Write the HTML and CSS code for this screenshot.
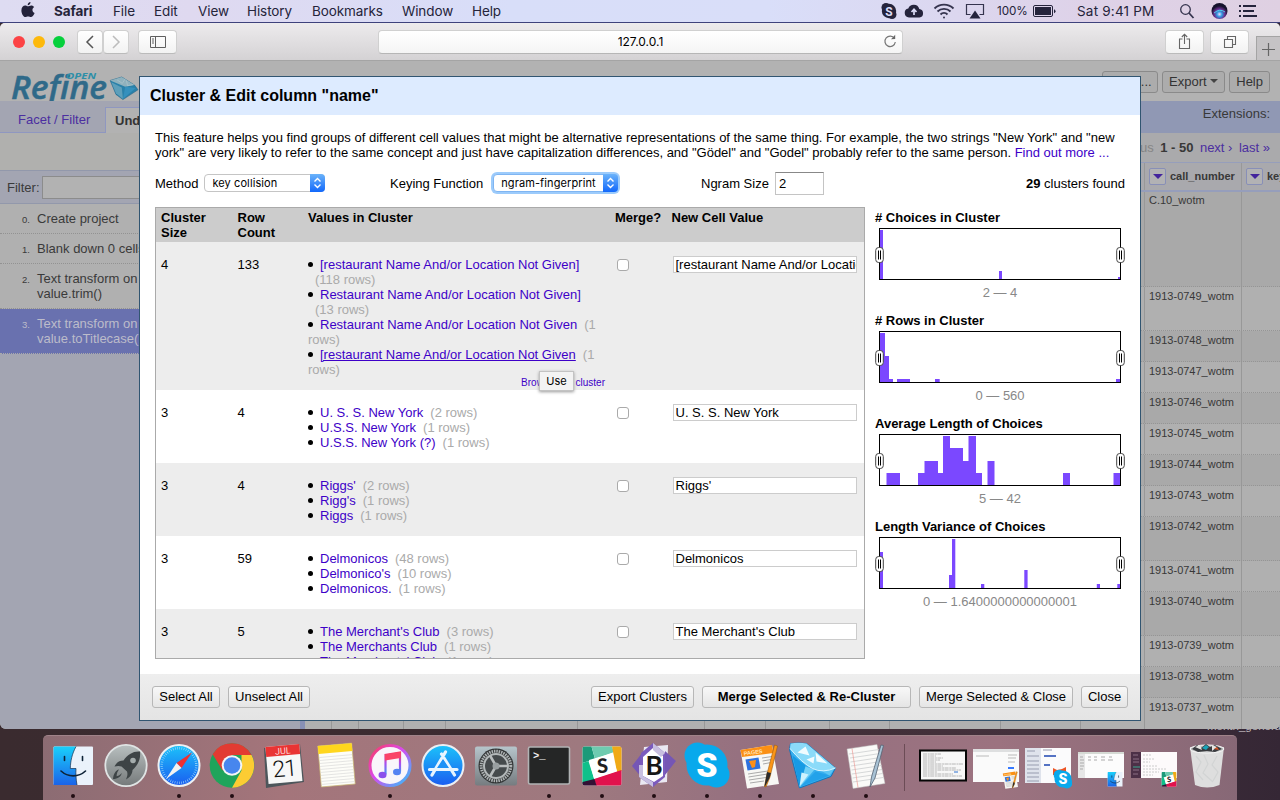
FILE: index.html
```html
<!DOCTYPE html>
<html lang="en">
<head>
<meta charset="utf-8">
<title>OpenRefine</title>
<link rel="stylesheet" href="styles.css">
</head>
<body>
<div class="desktop">
  <svg width="0" height="0" class="defs">
    <defs>
      <linearGradient id="gBlue" x1="0" y1="0" x2="0" y2="1"><stop offset="0" stop-color="#19d0fb"/><stop offset="1" stop-color="#1b63e8"/></linearGradient>
      <linearGradient id="gGrey" x1="0" y1="0" x2="0" y2="1"><stop offset="0" stop-color="#b9c0c0"/><stop offset="1" stop-color="#75797a"/></linearGradient>
      <linearGradient id="gStore" x1="0" y1="0" x2="0" y2="1"><stop offset="0" stop-color="#1cc3fa"/><stop offset="1" stop-color="#1a5cf0"/></linearGradient>
      <linearGradient id="gRing" x1="0" y1="0" x2="1" y2="1"><stop offset="0" stop-color="#fb3a5c"/><stop offset=".45" stop-color="#d94af0"/><stop offset="1" stop-color="#27c8fb"/></linearGradient>
      <linearGradient id="gNote" x1="0" y1="0" x2="0" y2="1"><stop offset="0" stop-color="#fb3b62"/><stop offset=".5" stop-color="#a94df0"/><stop offset="1" stop-color="#3a9bf6"/></linearGradient>
      <linearGradient id="gPref" x1="0" y1="0" x2="0" y2="1"><stop offset="0" stop-color="#b6c5cb"/><stop offset="1" stop-color="#767c80"/></linearGradient>
      <radialGradient id="gSiri" cx=".5" cy=".7" r=".65"><stop offset="0" stop-color="#f4d8ff"/><stop offset=".25" stop-color="#2f9ae0"/><stop offset=".5" stop-color="#6a2f90"/><stop offset=".8" stop-color="#15122c"/></radialGradient>
      <symbol id="finder" viewBox="0 0 48 48">
        <rect x="4.500" y="5.500" width="39.500" height="38.500" rx="1" fill="#eaf2fb"/>
        <path d="M5.500 5.500H27C23 13 21.500 20 21.300 27.500H27C26.700 33 27 38.500 28 44H4.500V6.500z" fill="url(#gBlue)"/>
        <path d="M27 5.500C23 13 21.500 20 21.300 27.500H27C26.700 33 27 38.500 28 44" fill="none" stroke="#17304f" stroke-width=".7"/>
        <path d="M15.500 15.500v4M33.500 15.500v4M12 30c7 6.500 17.500 6.500 24.500 0" fill="none" stroke="#0d2237" stroke-width="1.600" stroke-linecap="round"/>
      </symbol>
      <symbol id="slack" viewBox="0 0 48 48">
        <rect x="4.500" y="5.500" width="39" height="39" rx="2" fill="#fff"/>
        <path d="M4.500 7.500a2 2 0 0 1 2-2h7L17 18 4.500 22z" fill="#1c9a79"/><path d="M13.500 5.500H34L36 11 17 18z" fill="#6ecbb0"/>
        <path d="M34 5.500h7.500a2 2 0 0 1 2 2V30L39 31z" fill="#f0aa16"/><path d="M4.500 22l6-2 6 19-12 4z" fill="#0fc08a"/>
        <path d="M43.500 29v13.500a2 2 0 0 1-2 2H18L16 38z" fill="#e1124d"/><path d="M4.500 41l12-3 2 6.500h-12a2 2 0 0 1-2-2z" fill="#331034"/>
        <path d="M11 19L33 12.500l6 17.500-23 7.500z" fill="#fff"/>
        <text x="24.500" y="32" text-anchor="middle" font-family="Lato" font-weight="900" font-size="20" fill="#1f2022" transform="rotate(-4 24 25)">S</text>
      </symbol>
      <symbol id="skype" viewBox="0 0 48 48">
        <circle cx="14.500" cy="14.500" r="13" fill="#08a9ec"/><circle cx="33.500" cy="33.500" r="13" fill="#08a9ec"/><circle cx="24" cy="24" r="20.500" fill="#08a9ec"/>
        <text x="24" y="36" text-anchor="middle" font-family="Roboto" font-weight="900" font-size="34" fill="#fff">S</text>
      </symbol>
      <symbol id="pages" viewBox="0 0 48 48">
        <path d="M4.500 9L36 4l7 39-32 4.500z" fill="#f7f7f4"/><path d="M4.500 9L36 4l1.500 8L6 16z" fill="#fb9014"/>
        <text x="8" y="14.500" font-family="Liberation Sans" font-weight="bold" font-size="5.500" fill="#ffe6bd" transform="rotate(-8 8 14)">PAGES</text>
        <path d="M9.500 18.500l13-2 2 11-13 2z" fill="#2d72e0"/><path d="M13 20l7-1-1 7-3 1z" fill="#fb8f1b"/>
        <path d="M26 17l10-1.500M26.500 20l9-1.500M27 23l8-1.500M12 33l20-3M12.500 36l19-3M13 39l17-2.500M14 42l14-2" stroke="#aaa" stroke-width="1"/>
        <path d="M38.500 4l3 1-7.500 31-4 10-1.500-.5 2-10.500z" fill="#fb9617" stroke="#9d5d13" stroke-width=".6"/><path d="M31 31l4 1-1.500 5L29 45.500l-.5-.5z" fill="#2c2c2c"/>
      </symbol>
      <symbol id="gem" viewBox="0 0 48 46">
        <path d="M2 1Q10-.5 18 1L47 25.500 42.500 34 11 45.500 1 7z" fill="#38afee" stroke="#1275bb" stroke-width="1"/>
        <path d="M2 1Q10-.5 18 1L47 25.500Q34 31 24 26T1.500 6z" fill="#8bdbf9"/>
        <path d="M9 10l8-6 4 9zM27 10l12 11-11-2zM18 17l8-3-1 7z" fill="#f1fcff"/>
        <path d="M4 13L11 45 17 23z" fill="#179ae4"/><path d="M17 24L11 45 26 27z" fill="#74d2f8"/><path d="M27 29L12 44 41 33z" fill="#23a2ea"/><path d="M13 30L11 44 20 32z" fill="#cdf2fe"/><path d="M34 29L41 33 46 26z" fill="#5ec6f4"/>
        <path d="M1.500 6Q14 21 24 26T47 25.500" fill="none" stroke="#e9fbff" stroke-width=".9"/>
      </symbol>
    </defs>
  </svg>

  <header class="menubar">
    <svg class="apple" width="16" height="18" viewBox="0 0 16 18"><path d="M10.500 1c.1 1.600-1.200 3.200-2.800 3.200C7.500 2.600 9 1.100 10.500 1zM8 5.300c.8 0 1.700-.9 3.200-.9 1.200 0 2.300.7 3 1.600-2.600 1.600-2.100 5 .4 6.100-.7 2-2.200 4-3.700 4-1.100 0-1.500-.6-2.800-.6s-1.800.6-2.800.6C3.400 16.100 1.400 12.500 1.400 9.500 1.400 6.300 3.300 4.500 5.200 4.500c1.300 0 2.100.8 2.800.8z" fill="#23223a"/></svg>
    <nav class="menus"><b>Safari</b><span>File</span><span>Edit</span><span>View</span><span>History</span><span>Bookmarks</span><span>Window</span><span>Help</span></nav>
    <div class="status">
      <svg width="18" height="18" viewBox="0 0 18 18"><circle cx="9" cy="9" r="7.200" fill="#25243c"/><circle cx="6" cy="5.500" r="4.500" fill="#25243c"/><circle cx="12" cy="12.500" r="4.500" fill="#25243c"/><text x="9" y="13.500" text-anchor="middle" font-family="Roboto" font-size="12" font-weight="700" fill="#dcdcf6">S</text></svg>
      <svg width="20" height="18" viewBox="0 0 20 18"><path d="M5 15.500a4.500 4.500 0 0 1-.7-8.900A5.800 5.800 0 0 1 15.300 7 4.300 4.300 0 0 1 15.500 15.500z" fill="#25243c"/><path d="M10 13V8M7.500 10L10 7.300 12.500 10" stroke="#dcdcf6" stroke-width="1.700" fill="none"/></svg>
      <svg width="22" height="18" viewBox="0 0 22 18" fill="none" stroke="#35344e" stroke-width="1.900"><path d="M1.500 6.500a13.500 13.500 0 0 1 19 0M4.500 9.500a9.300 9.300 0 0 1 13 0M7.500 12.500a5 5 0 0 1 7 0"/><circle cx="11" cy="15.500" r="1" fill="#35344e" stroke="none"/></svg>
      <svg width="20" height="18" viewBox="0 0 20 18"><path d="M5.500 12.500H1.500v-10h17v10h-4" fill="none" stroke="#35344e" stroke-width="1.200"/><path d="M10 8.500l5.500 8h-11z" fill="#25243c"/></svg>
      <span class="pct">100%</span>
      <svg width="24" height="18" viewBox="0 0 24 18"><rect x=".5" y="3.500" width="19" height="11" rx="1.500" fill="none" stroke="#25243c"/><rect x="2" y="5" width="16" height="8" fill="#25243c"/><path d="M21 7.200v4q1.500-.5 1.500-2t-1.500-2z" fill="#25243c"/></svg>
      <span class="clock">Sat 9:41 PM</span>
      <svg width="16" height="18" viewBox="0 0 16 18" fill="none" stroke="#35344e"><circle cx="6.500" cy="7.500" r="4.800" stroke-width="1.300"/><path d="M10 11l4.500 5" stroke-width="1.800"/></svg>
      <svg class="siri" width="17" height="18" viewBox="0 0 17 18"><circle cx="8.500" cy="9" r="8" fill="url(#gSiri)"/><path d="M3 11q6-5 11-1" stroke="#4fd0ee" fill="none"/></svg>
      <svg width="18" height="18" viewBox="0 0 18 18" stroke="#25243c" stroke-width="1.800"><path d="M0 4h2M4 4h13M0 9h2M4 9h11M0 14h2M4 14h14"/></svg>
    </div>
  </header>

  <span class="desk-label">month_general</span>

  <main class="window">
    <div class="toolbar">
      <div class="lights"><i class="red"></i><i class="amber"></i><i class="green"></i></div>
      <div class="navpair">
        <button class="tool"><svg width="10" height="14" viewBox="0 0 10 14"><path d="M8 1L2 7l6 6" fill="none" stroke="#555" stroke-width="1.500"/></svg></button>
        <button class="tool"><svg width="10" height="14" viewBox="0 0 10 14"><path d="M2 1l6 6-6 6" fill="none" stroke="#bcbcbc" stroke-width="1.500"/></svg></button>
      </div>
      <button class="tool wide"><svg width="16" height="12" viewBox="0 0 16 12" fill="none" stroke="#5f5f5f"><path d="M.5.500h15v11H.5zM5.500.500v11M2 3h2M2 5h2M2 7h2"/></svg></button>
      <div class="address"><span>127.0.0.1</span><svg width="14" height="14" viewBox="0 0 14 14"><path d="M11.500 4.500A5.200 5.200 0 1 0 12.300 8" fill="none" stroke="#777" stroke-width="1.200"/><path d="M8 5.200L12.200 5V.8z" fill="#666"/></svg></div>
      <div class="right-tools">
        <button class="tool wide"><svg width="14" height="17" viewBox="0 0 14 17" fill="none" stroke="#666" stroke-width="1.100"><path d="M4.500 6H1.500v9.500h10V6h-3M6.500 11V1.500M3.800 4l2.700-2.700L9.200 4"/></svg></button>
        <button class="tool wide"><svg width="14" height="14" viewBox="0 0 14 14" fill="none" stroke="#666" stroke-width="1.100"><path d="M1.500 4.500h8v8h-8zM4.500 4V1.500h8v8H10"/></svg></button>
      </div>
      <div class="plus"><svg width="13" height="13" viewBox="0 0 13 13"><path d="M6.500 0v13M0 6.500h13" stroke="#666" stroke-width="1.200"/></svg></div>
    </div>

    <div class="apphead">
      <svg class="logo" width="130" height="40" viewBox="0 0 130 40">
        <text x="0" y="38" font-family="Open Sans" font-style="italic" font-weight="600" font-size="33" textLength="96" lengthAdjust="spacingAndGlyphs" fill="#2f6a89" stroke="#2f6a89" stroke-width=".5">Refine</text>
        <text x="55" y="18" font-family="Open Sans" font-style="italic" font-weight="700" font-size="8.500" textLength="30" lengthAdjust="spacingAndGlyphs" fill="#2e8fa8">OPEN</text>
        <g transform="translate(98 16) scale(.58)"><path d="M2 6L22 0 44 14 50 22 24 39 12 30z" fill="#2a81a9" stroke="#26668a"/><path d="M2 6L22 0 44 14 28 17z" fill="#8fb1bd"/><path d="M4 9l18 9 2 20L12 28z" fill="#5e9fba"/><path d="M28 17l18 2-22 19z" fill="#3590bd"/><path d="M14 5l9 6 5-8M30 6l2 9 10-2" stroke="#b5cad0" fill="none"/></g>
      </svg>
      <div class="headbtns"><span class="hb open">Open...</span><span class="hb">Export <i class="caret"></i></span><span class="hb">Help</span></div>
    </div>

    <div class="appbody">
      <aside class="side">
        <div class="tabs"><span class="tab">Facet / Filter</span><span class="tab on">Undo / Redo <small>3</small></span></div>
        <div class="sidegap"></div>
        <div class="filter"><span>Filter:</span><div class="fbox"></div></div>
        <div class="hist"><small>0.</small><p>Create project</p></div>
        <div class="hist"><small>1.</small><p>Blank down 0 cells</p></div>
        <div class="hist"><small>2.</small><p>Text transform on 0<br>value.trim()</p></div>
        <div class="hist sel"><small>3.</small><p>Text transform on 1<br>value.toTitlecase()</p></div>
      </aside>
      <div class="split"></div>
      <section class="grid">
        <div class="ext">Extensions:</div>
        <div class="pager"><span class="off">previous</span><b>1 - 50</b><a>next ›</a><a>last »</a></div>
        <div class="row th"><div></div><div><i class="dd"></i>call_number</div><div><i class="dd"></i>key</div></div>
        <div class="row h96 dk"><div></div><div>C.10_wotm</div><div></div></div>
        <div class="row h44"><div></div><div>1913-0749_wotm</div><div></div></div>
        <div class="row dk"><div></div><div>1913-0748_wotm</div><div></div></div>
        <div class="row"><div></div><div>1913-0747_wotm</div><div></div></div>
        <div class="row dk"><div></div><div>1913-0746_wotm</div><div></div></div>
        <div class="row"><div></div><div>1913-0745_wotm</div><div></div></div>
        <div class="row dk"><div></div><div>1913-0744_wotm</div><div></div></div>
        <div class="row"><div></div><div>1913-0743_wotm</div><div></div></div>
        <div class="row h44 dk"><div></div><div>1913-0742_wotm</div><div></div></div>
        <div class="row"><div></div><div>1913-0741_wotm</div><div></div></div>
        <div class="row h44 dk"><div></div><div>1913-0740_wotm</div><div></div></div>
        <div class="row"><div></div><div>1913-0739_wotm</div><div></div></div>
        <div class="row dk"><div></div><div>1913-0738_wotm</div><div></div></div>
        <div class="row full"><div></div><div></div><div></div><div></div><div></div><div></div><div></div><div></div><div></div><div></div><div></div><div></div><div>1913-0737_wotm</div><div></div></div>
      </section>
    </div>
  </main>

  <div class="dialog">
    <h1>Cluster &amp; Edit column "name"</h1>
    <div class="dbody">
      <p class="desc">This feature helps you find groups of different cell values that might be alternative representations of the same thing. For example, the two strings "New York" and "new<br>york" are very likely to refer to the same concept and just have capitalization differences, and "Gödel" and "Godel" probably refer to the same person. <a>Find out more ...</a></p>
      <div class="controls">
        <label class="c1">Method <span class="select s1"><em>key collision</em><i><svg width="9" height="12" viewBox="0 0 9 12"><path d="M1.500 4.500l3-3 3 3M1.500 7.500l3 3 3-3" fill="none" stroke="#fff" stroke-width="1.400"/></svg></i></span></label>
        <label class="c2">Keying Function <span class="select s2"><em>ngram-fingerprint</em><i><svg width="9" height="12" viewBox="0 0 9 12"><path d="M1.500 4.500l3-3 3 3M1.500 7.500l3 3 3-3" fill="none" stroke="#fff" stroke-width="1.400"/></svg></i></span></label>
        <label class="c3">Ngram Size <span class="num">2</span></label>
        <span class="found"><b>29</b> clusters found</span>
      </div>
      <div class="cols">
        <div class="clusters">
          <div class="cr head"><div>Cluster Size</div><div>Row Count</div><div>Values in Cluster</div><div>Merge?</div><div>New Cell Value</div></div>
          <div class="cr alt"><div>4</div><div>133</div><div>
            <ul><li><a>[restaurant Name And/or Location Not Given]</a><br><s class="in">(118 rows)</s></li><li><a>Restaurant Name And/or Location Not Given]</a><br><s class="in">(13 rows)</s></li><li><a>Restaurant Name And/or Location Not Given</a><s>(1<br>rows)</s></li><li><a class="u">[restaurant Name And/or Location Not Given</a><s>(1<br>rows)</s></li></ul>
            <div class="browse">Browse this cluster<span class="tip">Use</span></div></div><div><i class="check"></i></div><div><span class="val">[restaurant Name And/or Location Not Given]</span></div></div>
          <div class="cr"><div>3</div><div>4</div><div><ul><li><a>U. S. S. New York</a><s>(2 rows)</s></li><li><a>U.S.S. New York</a><s>(1 rows)</s></li><li><a>U.S.S. New York (?)</a><s>(1 rows)</s></li></ul></div><div><i class="check"></i></div><div><span class="val">U. S. S. New York</span></div></div>
          <div class="cr alt"><div>3</div><div>4</div><div><ul><li><a>Riggs'</a><s>(2 rows)</s></li><li><a>Rigg's</a><s>(1 rows)</s></li><li><a>Riggs</a><s>(1 rows)</s></li></ul></div><div><i class="check"></i></div><div><span class="val">Riggs'</span></div></div>
          <div class="cr"><div>3</div><div>59</div><div><ul><li><a>Delmonicos</a><s>(48 rows)</s></li><li><a>Delmonico's</a><s>(10 rows)</s></li><li><a>Delmonicos.</a><s>(1 rows)</s></li></ul></div><div><i class="check"></i></div><div><span class="val">Delmonicos</span></div></div>
          <div class="cr alt"><div>3</div><div>5</div><div><ul><li><a>The Merchant's Club</a><s>(3 rows)</s></li><li><a>The Merchants Club</a><s>(1 rows)</s></li><li><a>The Merchants' Club</a><s>(1 rows)</s></li></ul></div><div><i class="check"></i></div><div><span class="val">The Merchant's Club</span></div></div>
        </div>
        <div class="facets">
          <div class="facet"><h2># Choices in Cluster</h2>
            <svg width="250" height="52" viewBox="0 0 250 52"><path d="M5 51V2H8V51zM124 51V43H127V51zM243 51V49H246V51z" fill="#7b48ff"/><rect x="4.500" y=".5" width="241" height="51" fill="none" stroke="#000"/><g id="handles"><rect x=".7" y="19.500" width="7.600" height="15" rx="3" fill="#fff" stroke="#444"/><path d="M3.500 22.500v9M5.500 22.500v9" stroke="#000"/><rect x="241.700" y="19.500" width="7.600" height="15" rx="3" fill="#fff" stroke="#444"/><path d="M244.500 22.500v9M246.500 22.500v9" stroke="#000"/></g></svg><p>2 — 4</p></div>
          <div class="facet"><h2># Rows in Cluster</h2>
            <svg width="250" height="52" viewBox="0 0 250 52"><path d="M5 51V2H10V25H14V48H18V51zM22 51V48H35V51zM60 51V48H64.700V51zM241 51V48H246V51z" fill="#7b48ff"/><rect x="4.500" y=".5" width="241" height="51" fill="none" stroke="#000"/><use href="#handles"/></svg><p>0 — 560</p></div>
          <div class="facet"><h2>Average Length of Choices</h2>
            <svg width="250" height="52" viewBox="0 0 250 52"><path d="M11.500 51V39H25V51zM43 51V39H49.500V27H63V39H68V2H75V14H88V27H93.500V2H101V39H107V51zM112.500 51V27H119.500V51zM188 51V39H195V51zM238.500 51V39H246V51z" fill="#7b48ff"/><rect x="4.500" y=".5" width="241" height="51" fill="none" stroke="#000"/><use href="#handles"/></svg><p>5 — 42</p></div>
          <div class="facet"><h2>Length Variance of Choices</h2>
            <svg width="250" height="52" viewBox="0 0 250 52"><path d="M5 51V15H8V51zM74 51V38H77V2H80.300V51zM106 51V47H109.300V51zM149.300 51V33H152.600V51zM221.800 51V47H225V51zM242.300 51V47H246V51z" fill="#7b48ff"/><rect x="4.500" y=".5" width="241" height="51" fill="none" stroke="#000"/><use href="#handles"/></svg><p>0 — 1.6400000000000001</p></div>
        </div>
      </div>
    </div>
    <footer class="dfoot"><button class="w68">Select All</button><button class="w82">Unselect All</button><button class="w103 push">Export Clusters</button><button class="w209">Merge Selected &amp; Re-Cluster</button><button class="w154">Merge Selected &amp; Close</button><button class="w47">Close</button></footer>
  </div>

  <div class="dock">
    <div class="app run"><svg><use href="#finder"/></svg></div>
    <div class="app"><svg viewBox="0 0 48 48"><circle cx="24" cy="24.500" r="20.700" fill="url(#gGrey)" stroke="#e0e4e4" stroke-width="1.800"/><path d="M38 10.500c-7-.5-12.500 3-16.500 9-4 0-6.500 1.500-9 6 3-.8 5-.8 7 0l5.500 5c.8 2.500.5 4.500-1 8 4.500-2.500 6.300-5.500 6.500-9.500 5-4.500 8.500-10.500 7.500-18.500zM17 28.500c-3 .5-5.500 4-6 9.500 5 0 8-2.500 8.800-6-2 2.500-4 3.200-5.200 3.200 0-2.500 1-4.800 2.400-6.700z" fill="#3e4446"/><circle cx="31" cy="19.500" r="2.800" fill="#a4acac"/></svg></div>
    <div class="app run"><svg viewBox="0 0 48 48"><circle cx="24" cy="24.500" r="20.500" fill="url(#gStore)" stroke="#eef0f2" stroke-width="2"/><circle cx="24" cy="24.500" r="17.300" fill="none" stroke="#a5dcf8" stroke-width="2.400" stroke-dasharray=".6 1.600"/><path d="M37 11.500L26.500 27 21.500 22z" fill="#ee3030"/><path d="M11 38l10.500-16 5 5z" fill="#f2f2f2"/></svg></div>
    <div class="app run"><svg viewBox="0 0 48 48"><circle cx="24" cy="24.500" r="22.300" fill="#1fa45b"/><path d="M4.700 13.300A22.300 22.300 0 0 1 43.500 14H24L14.500 29.500z" fill="#e23b32"/><path d="M43.500 14A22.300 22.300 0 0 1 24 46.800L33.500 29.500 33.500 14z" fill="#fccc33"/><circle cx="24" cy="24.500" r="10.300" fill="#f5f5f5"/><circle cx="24" cy="24.500" r="8.300" fill="#4786ee"/></svg></div>
    <div class="app"><svg viewBox="0 0 48 48"><path d="M4 7l36-4 4 38-38 6z" fill="#4d565b"/><g transform="rotate(-5 24 24)"><rect x="7" y="4.500" width="34" height="37" fill="#f7f7f7"/><path d="M7 4.500h34v10H7z" fill="#e93434"/><text x="24" y="13" text-anchor="middle" font-family="Roboto" font-size="9" fill="#ffd9d9">JUL</text><text x="24" y="35.500" text-anchor="middle" font-family="Roboto" font-weight="300" font-size="23" letter-spacing="-1" fill="#111">21</text></g></svg></div>
    <div class="app"><svg viewBox="0 0 48 48"><g transform="rotate(-5 24 24)"><rect x="6.500" y="3.500" width="34" height="41" fill="#fdfdf8" stroke="#c7b36f" stroke-width=".7"/><path d="M6.500 3.500h34v8h-34z" fill="#ffd61d"/><path d="M7 15h33M7 18h33M7 21h33M7 24h33M7 27h33M7 30h33M7 33h33M7 36h33M7 39h33M7 42h33" stroke="#d5d5d5" stroke-width=".6"/></g></svg></div>
    <div class="app run"><svg viewBox="0 0 48 48"><circle cx="24" cy="24.500" r="20" fill="#f9f6fb" stroke="url(#gRing)" stroke-width="3"/><path d="M19.500 33.500V14L34 11.500v19" fill="none" stroke="url(#gNote)" stroke-width="2.200"/><path d="M19 13.500l15.500-2.500v6L19 19.500z" fill="#fa4568"/><ellipse cx="16.500" cy="34" rx="4" ry="3.200" fill="#8b50ec"/><ellipse cx="31" cy="31" rx="4" ry="3.200" fill="#5583f2"/></svg></div>
    <div class="app"><svg viewBox="0 0 48 48"><circle cx="24" cy="24.500" r="20.500" fill="url(#gStore)" stroke="#eceff3" stroke-width="2"/><path d="M22.500 13L35.500 34M26.500 11L13 34M10.500 28.500H38" stroke="#e8f5ff" stroke-width="3.200" fill="none" stroke-linecap="round"/><path d="M24 18l6 9H18z" fill="#1c91f7"/></svg></div>
    <div class="app"><svg viewBox="0 0 48 48"><rect x="3" y="5.500" width="42" height="39" rx="2" fill="url(#gPref)"/><circle cx="24" cy="25" r="17.500" fill="#333637"/><circle cx="24" cy="25" r="14.800" fill="none" stroke="#aeb3b4" stroke-width="3" stroke-dasharray="1.500 .9"/><circle cx="24" cy="25" r="12" fill="#454a4c" stroke="#b3b8b9" stroke-width="2"/><path d="M24 25h12M24 25l-6-10.500M24 25l-6 10.500" stroke="#b8bcbd" stroke-width="2.600"/><circle cx="24" cy="25" r="3.500" fill="#999fa1"/></svg></div>
    <div class="app run"><svg viewBox="0 0 48 48"><rect x="3.500" y="6" width="41" height="37" rx="1.500" fill="#252626" stroke="#b1b3b4" stroke-width="1.600"/><text x="8" y="17.500" font-family="Liberation Mono" font-weight="bold" font-size="10.500" fill="#eee">&gt;_</text></svg></div>
    <div class="app run"><svg><use href="#slack"/></svg></div>
    <div class="app run"><svg viewBox="0 0 48 48"><path d="M14 6l24-2-1 37-27 3z" fill="#eae8f2"/><path d="M2 25L12 12v25zM46 20L35 10v24z" fill="#7556b5"/><path d="M23 2l12 10v24L23 46 9 36 11 12z" fill="#7c5bbd"/><path d="M23 7l10 8v20l-9 6-11-6V16z" fill="#fff"/><path d="M23 2l12 10-4 4-8-7zM9 24h4v11l10 6v5L9 36z" fill="#c8bfe0"/><text x="24" y="33.500" text-anchor="middle" font-family="Lato" font-weight="700" font-size="26" fill="#171717">B</text></svg></div>
    <div class="app run"><svg viewBox="0 0 48 48"><use href="#skype"/></svg></div>
    <div class="app run"><svg><use href="#pages"/></svg></div>
    <div class="app run"><svg viewBox="0 0 48 48"><use href="#gem" x="-0.500" y="1.500" width="48" height="46"/></svg></div>
    <div class="app run"><svg viewBox="0 0 48 48"><path d="M5 8L35 3.500l8 39-32 5z" fill="#fafaf8" stroke="#bbb" stroke-width=".5"/><path d="M7 13l30-4.500M8 17l30-4.500M8.500 21l30-4.500M9 25l30-4.500M9.500 29l30-4.500M10 33l30-4.500M10.500 37l30-4.500M11 41l30-4.500" stroke="#c5c8ca" stroke-width=".7"/><path d="M10 7.500l6 39" stroke="#ee9c97" stroke-width=".7"/><path d="M39 4l2.500.5L33 37l-5 9 1.500-10z" fill="#a9c3d5" stroke="#536272" stroke-width=".8"/></svg></div>
    <div class="sep"></div>
    <div class="thumb"><svg viewBox="0 0 48 48"><rect x="1" y="9.500" width="46" height="30" fill="#f7f7f7" stroke="#050505" stroke-width="2"/><path d="M4 13h18M4 15h13M4 17h20M4 19h17M4 21h13M4 23h40M4 25h20M4 27h33M4 29h38M4 31h14M4 33h30M4 35h39" stroke="#a6a6a6" stroke-width=".8" stroke-dasharray="4 .7 2 .5"/><path d="M35 31h4" stroke="#2c71d0"/></svg></div>
    <div class="thumb"><svg viewBox="0 0 48 48"><path d="M1 8h46v33H1z" fill="#fafafa"/><path d="M1 8h46v3H1z" fill="#dedfe0"/><path d="M4 15h13M36 14h9M36 17h8M36 21h7" stroke="#aaa" stroke-width=".8"/><path d="M36 27h6" stroke="#3478ff" stroke-width="2"/><use href="#pages" x="29" y="29" width="19" height="19"/></svg></div>
    <div class="thumb"><svg viewBox="0 0 48 48"><path d="M1 7h46v35H1z" fill="#fbfbfc"/><path d="M1 7h16v35H1z" fill="#dfe3ec"/><path d="M3 10h8M3 15h12M3 20h12M3 24h12M3 28h12M3 32h12M3 36h12M3 40h12M19 9h9" stroke="#979caf" stroke-width="1"/><path d="M20 15h12M20 24h6" stroke="#5573c4" stroke-width="2"/><path d="M29 27l4 2 5-1 4-2v8H29z" fill="#ed5425"/><use href="#skype" x="29" y="28" width="20" height="20"/></svg></div>
    <div class="thumb"><svg viewBox="0 0 48 48"><path d="M1 11h46v26H1z" fill="#fcfcfc"/><path d="M1 11h7v26H1z" fill="#e6e6e6"/><path d="M1 11h46v2H1z" fill="#d5dad4"/><path d="M3 16h3M3 19h4M3 22h4M3 25h4M3 28h3M11 19h3M17 19h3M24 19h4M31 19h5M11 16h3M17 16h3M24 16h4M32 16h3" stroke="#ababab"/><use href="#finder" x="29" y="29" width="18" height="18"/></svg></div>
    <div class="thumb"><svg viewBox="0 0 48 48"><path d="M1 11h46v26H1z" fill="#fdfafb"/><path d="M1 11h10v26H1z" fill="#4c3047"/><path d="M3 14h5M3 18h6M3 21h6M3 29h6M3 33h5" stroke="#8b6e85"/><path d="M3 26h7" stroke="#39a890"/><path d="M13 14h8M13 18h12M13 21h7M13 25h14M13 28h23M13 31h16M13 34h10" stroke="#ccc" stroke-dasharray="2 1"/><use href="#slack" x="30" y="29" width="18" height="18"/></svg></div>
    <div class="thumb"><svg viewBox="0 0 48 48"><path d="M7 6h34l-4.500 38q-12.500 5-24.500 0z" fill="#e1e2e1" opacity=".97"/><ellipse cx="24" cy="8" rx="17" ry="4" fill="#bfc0c0" stroke="#f6f6f6"/><path d="M9 8l5-4 4 3 5-4 4 3 5-2 7 4-7 3-8-1-9 1z" fill="#393b3f"/><path d="M12 6l5-2 2 5zM29 4l5 2-5 4z" fill="#e6e5e2"/><path d="M19 7l4 2 3-3-3-2z" fill="#18a4b9"/><path d="M31 8l3-2 2 3z" fill="#d85525"/><path d="M13 15l5 6-5 10 7 8M21 14l4 9-5 9 10 9M34 15l-5 9 6 7-5 9" stroke="#d2d4d4" fill="none" stroke-width="1.200"/></svg></div>
  </div>
</div>
</body>
</html>
```

FILE: styles.css
```css
* { box-sizing: border-box; }
body { margin: 0; font: 13px/15px "Liberation Sans", Arial, sans-serif; }
h1, h2, p, ul { margin: 0; padding: 0; }
button { font: inherit; color: inherit; padding: 0; }
a { color: #3d00c8; }
.desktop { position: relative; width: 1280px; height: 800px; overflow: hidden; background: linear-gradient(90deg, #3a2b2f, #3d2b31 40%, #44313c 80%, #352735); }
.defs { position: absolute; }

.menubar { height: 23px; display: flex; align-items: center; background: linear-gradient(90deg, #dedcf2, #dfd9f0 15%, #d8def9 40%, #d9def9 60%, #ded2e8 85%, #dfd0e2); border-bottom: 1px solid #3e427c; color: #25243a; font: 500 13.500px/22px Inter, sans-serif; letter-spacing: -.1px; }
.apple { margin: -2px 18px 0 20px; }
.menus { display: grid; grid-template-columns: 59px 41px 44px 49px 65px 90px 70px 50px; font-weight: 400; }
.menus b { font-weight: 700; }
.status { margin-left: auto; width: 404px; display: flex; align-items: center; font-weight: 400; }
.status svg { flex: none; margin-right: 6px; }
.status > svg:nth-child(1) { margin-left: 4px; }
.status > svg:nth-child(2) { margin-right: 9px; }
.status > svg:nth-child(3) { margin-right: 10px; }
.status > svg:nth-child(4) { margin-right: 12px; }
.status > svg:nth-child(6) { margin: 0 20px 0 0; }
.status > svg:nth-child(8) { margin: 0 16px 0 -1px; }
.status > svg:nth-child(9) { margin-right: 11px; }
.pct { width: 36px; font-size: 11.700px; }
.clock { width: 103px; white-space: nowrap; letter-spacing: .2px; }

.desk-label { position: absolute; left: 1207px; top: 719px; font-size: 11.500px; color: #bdb6bb; }

.window { position: relative; height: 706px; border-radius: 5px 5px 6px 6px; overflow: hidden; background: #b2b2b2; }
.toolbar { height: 38px; display: flex; align-items: center; background: linear-gradient(#edebed, #d4d2d4); border-bottom: 1px solid #a4a4a4; }
.lights { display: flex; gap: 8px; width: 77px; padding-left: 13px; }
.lights i { width: 12px; height: 12px; border-radius: 50%; }
.red { background: #fc4345; } .amber { background: #fdb90b; } .green { background: #06d03c; }
.tool { width: 26px; height: 24px; border: 1px solid #d0d0d0; border-bottom-color: #bbb; border-radius: 4px; background: linear-gradient(#fff, #f2f2f2); display: flex; align-items: center; justify-content: center; }
.tool.wide { width: 39px; }
.navpair { display: flex; gap: 0; width: 61px; }
.address { margin-left: 201px; width: 525px; height: 24px; display: flex; align-items: center; justify-content: center; position: relative; border: 1px solid #d0d0d0; border-bottom-color: #b6b6b6; border-radius: 4px; background: linear-gradient(#fff, #f4f4f4); font: 12px Inter, sans-serif; letter-spacing: 0; }
.address svg { position: absolute; right: 5px; top: 3px; }
.right-tools { margin-left: auto; display: flex; gap: 6px; margin-right: 7px; }
.plus { align-self: flex-end; width: 24px; height: 24px; padding: 6px 0 0 5px; background: #c5c3c5; border: solid #a4a4a4; border-width: 1px 0 0 1px; }

.apphead { height: 40px; display: flex; justify-content: space-between; background: #b2b2b2; color: #333; }
.logo { margin-left: 11px; }
.headbtns { display: flex; gap: 4px; padding: 10px 10px 0 0; }
.hb { height: 22px; line-height: 20px; padding: 0 6px; border: 1px solid #8a8a8a; border-radius: 3px; background: #acacac; }
.hb.open { width: 56px; text-align: right; }
.caret { display: inline-block; margin: 0 0 3px; border: 4px solid transparent; border-top-color: #444; border-bottom: 0; }

.appbody { display: flex; height: 628px; }
.side { width: 300px; flex: none; background: #a3a5b2; color: #3a3a3a; }
.tabs { height: 32px; display: flex; align-items: flex-end; }
.tab { width: 105px; height: 32px; padding: 11px 0 0 18px; color: #4b2fa0; border-bottom: 1px solid #8f97c0; white-space: nowrap; }
.tab.on { width: 195px; height: 26px; padding: 5px 0 0 9px; color: #333; font-weight: bold; background: #b2b2b2; border: solid #8f97c0; border-width: 1px 0 0 1px; }
.sidegap { height: 37px; background: #b0b0ae; }
.filter { height: 34px; display: flex; align-items: center; padding-left: 7px; border: solid #9298ab; border-width: 1px 0; gap: 2px; }
.fbox { width: 240px; height: 23px; background: #b2b2b2; border: 1px solid #8c8c8c; }
.hist { display: flex; padding: 7px 0 7px 22px; background: #b0b0b0; border-bottom: 1px dotted #929292; }
.hist small { width: 15px; font-size: 9.500px; line-height: 15px; padding-top: 1px; height: 15px; }
.hist p { white-space: nowrap; }
.hist.sel { background: #6971af; color: #bcbcca; border-bottom-color: #aaa; }
.split { width: 5px; flex: none; background: #8890b5; }
.grid { flex: 1; color: #383838; background: #aeaeae; min-width: 0; }
.ext { height: 32px; background: #9098b4; text-align: right; padding: 5px 10px 0 0; }
.pager { height: 29px; background: #aaaaac; display: flex; justify-content: flex-end; gap: 6.500px; padding: 7px 10px 0 0; white-space: nowrap; }
.pager a { color: #4b2fa0; } .off { color: #858585; }
.row { height: 31px; display: grid; grid-template-columns: 840px 97px 1fr; background: #b0b0b0; border-bottom: 1px dotted #959595; font-size: 11px; line-height: 13px; }
.row div { padding: 3px 0 0 4px; border-right: 1px solid #989898; white-space: nowrap; overflow: hidden; }
.row div:last-child { border-right: 0; }
.row.dk { background: #a9a9a9; } .row.h44 { height: 44px; } .row.h96 { height: 95px; }
.row.h96 div { padding-top: 2px; }
.row.th { height: 30px; background: #a9a9ad; border-top: 1px solid #969ebb; border-bottom: 2px solid #969ebb; font-weight: bold; font-size: 11px; }
.row.th div { display: flex; align-items: center; padding-top: 0; }
.dd { flex: none; width: 17px; height: 17px; margin-right: 4px; border: 1px solid #888fb7; border-radius: 2px; display: grid; place-items: center; background: #b2b2b4; }
.dd::after { content: ""; border: 5px solid transparent; border-top-color: #43249c; border-bottom: 0; }
.row.full { grid-template-columns: 27px 27px 45px 42px 132px 127px 61px 64px 60px 111px 80px 64px 97px 1fr; border-bottom: 0; }

.dialog { position: absolute; left: 139px; top: 76px; width: 1002px; height: 645px; display: flex; flex-direction: column; background: #fff; border: 1px solid #315571; color: #000; }
.dialog h1 { height: 38px; padding: 9px 10px; background: #ddebff; font-size: 16px; line-height: 19px; }
.dbody { flex: 1; padding: 15px 15px 0; min-height: 0; }
.desc { white-space: nowrap; }
.controls { display: flex; align-items: center; margin-top: 11px; height: 24px; }
.controls label { display: flex; align-items: center; white-space: nowrap; }
.c1 { width: 235px; gap: 6px; } .c2 { width: 311px; gap: 10px; } .c3 { gap: 6px; }
.select { height: 18px; display: flex; justify-content: space-between; border: 1px solid #c5c5c5; border-radius: 4px; font: 11px/16px Inter, sans-serif; background: #fff; padding-left: 7px; letter-spacing: .1px; }
.select em { font-style: normal; }
.s1 { width: 121px; } .s2 { width: 125px; border-color: #7fb5f2; box-shadow: 0 0 0 2px #9ccbfb; }
.select i { width: 15px; margin: -1px; border-radius: 0 4px 4px 0; background: linear-gradient(#6bb3fa, #1268fb); display: grid; place-items: center; }
.num { width: 49px; height: 23px; padding: 3px; border: 1px solid #c4c4c4; border-top-color: #888; }
.found { margin-left: auto; }
.cols { display: flex; gap: 10px; margin-top: 12px; }
.clusters { width: 710px; height: 452px; overflow: hidden; border: 1px solid #aaa; }
.cr { display: grid; grid-template-columns: 76.500px 70.500px 307px 56.500px 1fr; min-height: 73px; padding: 15px 0 0; }
.cr > div { padding-left: 5px; }
.cr.alt { background: #ededed; }
.cr.head { min-height: 0; height: 34px; padding: 2px 0; background: #ccc; font-weight: bold; }
.cr.head > div:nth-child(-n+2) { padding-right: 20px; }
.cr ul { list-style: none; }
.cr li::before { content: ""; display: inline-block; width: 5px; height: 5px; margin: 0 7px 2px 0; border-radius: 50%; background: #000; }
.cr s { text-decoration: none; color: #aaa; margin-left: 7px; }
.cr .u { text-decoration: underline; }
.browse { position: relative; height: 13px; font-size: 10px; line-height: 11px; color: #3d00c8; text-align: right; padding-right: 5px; white-space: nowrap; }
.tip { position: absolute; left: 231px; top: -6px; width: 35px; height: 20px; border: 1px solid #c3c3c3; background: #f3f3f3; box-shadow: 0 1px 3px #999; color: #000; font: 11px/18px Inter, sans-serif; text-align: center; }
.check { display: block; width: 12px; height: 12px; margin: 2px 0 0 2px; border: 1px solid #aaa; border-radius: 3px; background: #fff; }
.val { display: block; width: 184px; height: 17px; margin: -1px 0 0 1.500px; padding: 0 1.500px; overflow: hidden; white-space: nowrap; border: 1px solid #ccc; background: #fff; }
.facets { width: 250px; padding-top: 3px; }
.facet { height: 103px; }
.facet h2 { font-size: 13px; line-height: 15px; height: 18px; }
.facet svg { display: block; }
.facet p { margin-top: 5px; text-align: center; color: #888; }
.dfoot { height: 46px; display: flex; gap: 8px; padding: 12px; background: linear-gradient(#eee, #e4e4e4); }
.dfoot button { height: 22px; padding-bottom: 1px; border: 1px solid #b7b7b7; border-radius: 3px; background: linear-gradient(#f8f8f8, #e5e5e5); white-space: nowrap; }
.w68 { width: 68px; } .w82 { width: 82px; } .dfoot .push { margin-left: auto; } .w103 { width: 103px; } .w209 { width: 209px; font-weight: bold; } .w154 { width: 154px; } .w47 { width: 47px; }

.dock { position: absolute; left: 43px; top: 735px; width: 1194px; height: 65px; padding: 5px 0 0 3.600px; display: flex; border-radius: 5px 5px 0 0; background: linear-gradient(90deg, #8c6c73, #a4757b 20%, #9e797f 45%, #957080 60%, #9c7380 80%, #876876); border-top: 1px solid #a08389; }
.app, .thumb { width: 52.870px; flex: none; display: flex; flex-direction: column; align-items: center; }
.app svg, .thumb svg { width: 48px; height: 48px; flex: none; }
.app.run::after { content: ""; width: 4px; height: 4px; margin-top: 5px; border-radius: 50%; background: #210d12; }
.sep { width: 1px; height: 47px; margin: 3px 11px 0 12px; background: #6c4c56; }
```
